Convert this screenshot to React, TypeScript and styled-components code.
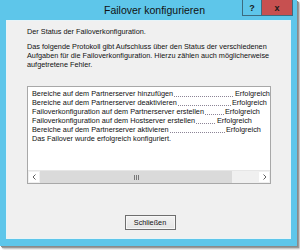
import React from 'react'
import styled, { createGlobalStyle } from 'styled-components'

interface LogEntry {
    text: string
    status?: string
    lead?: number
}

const logEntries: LogEntry[] = [
    { text: 'Bereiche auf dem Partnerserver hinzufügen', status: 'Erfolgreich', lead: 203 },
    { text: 'Bereiche auf dem Partnerserver deaktivieren', status: 'Erfolgreich', lead: 200 },
    { text: 'Failoverkonfiguration auf dem Partnerserver erstellen', status: 'Erfolgreich', lead: 193 },
    { text: 'Failoverkonfiguration auf dem Hostserver erstellen', status: 'Erfolgreich', lead: 185 },
    { text: 'Bereiche auf dem Partnerserver aktivieren', status: 'Erfolgreich', lead: 194 },
    { text: 'Das Failover wurde erfolgreich konfiguriert.' },
]

const GlobalStyle = createGlobalStyle`
    html, body {
        margin: 0;
        padding: 0;
        background: #ffffff;
    }
    body {
        width: 300px;
        height: 250px;
        overflow: hidden;
        font-family: "Liberation Sans", Arial, sans-serif;
    }
`

const Window = styled.div`
    width: 297px;
    height: 246px;
    box-sizing: border-box;
    background: #5ec6ea;
    padding: 0 6px 7px 6px;
    display: flex;
    flex-direction: column;
    box-shadow: 1px 1px 0 #8a8a8a, 2px 2px 1px #9a9a9a, 3px 3px 2px rgba(0, 0, 0, 0.25);
`

const TitleBar = styled.div`
    height: 20px;
    display: grid;
    grid-template-columns: 1fr auto 1fr;
    align-items: start;
    margin-right: -2px;
`

const Title = styled.div`
    grid-column: 2;
    font-family: "Liberation Sans", Arial, sans-serif;
    font-size: 10.5px;
    line-height: 20px;
    color: #111;
    padding-left: 10px;
`

const CaptionButtons = styled.div`
    grid-column: 3;
    justify-self: end;
    display: flex;
`

const CaptionButton = styled.div<{ $close?: boolean }>`
    width: ${p => (p.$close ? 31 : 20)}px;
    height: 16px;
    box-sizing: border-box;
    border: 1px solid #3c6c80;
    border-top: none;
    ${p => (p.$close ? 'border-left: none;' : '')}
    background: ${p => (p.$close ? '#c75050' : '#5ec6ea')};
    display: flex;
    align-items: center;
    justify-content: center;
    font-size: 9px;
    font-weight: bold;
    color: #1a1a1a;
`

const Body = styled.div`
    flex: 1;
    background: #f0f0f0;
    border: 1px solid #e8f4f8;
    padding: 6px 19px 0 20px;
    display: flex;
    flex-direction: column;
    font-size: 7.3px;
    line-height: 9px;
    color: #111;
`

const Paragraph = styled.p<{ $gap: number }>`
    margin: 0 0 ${p => p.$gap}px 0;
`

const LogBox = styled.div`
    height: 98px;
    box-sizing: border-box;
    border: 1px solid #a8a8a8;
    background: #ffffff;
    display: flex;
    flex-direction: column;
`

const LogLines = styled.div`
    flex: 1;
    padding: 2px 0 0 4px;
    overflow: hidden;
`

const LogRow = styled.div`
    display: flex;
    white-space: nowrap;
`

const Lead = styled.span<{ $w: number }>`
    width: ${p => p.$w}px;
    display: flex;
    flex: none;
`

const Dots = styled.span`
    flex: 1;
    margin: 0 1px 0 1px;
    height: 9px;
    background-image: linear-gradient(to right, #8c8496 1px, transparent 1px);
    background-size: 2px 1px;
    background-position: 0 7px;
    background-repeat: repeat-x;
`

const ScrollBar = styled.div`
    height: 12px;
    display: flex;
    background: #f0f0f0;
    border-top: 1px solid #e6e6e6;
`

const ScrollArrow = styled.div`
    width: 12px;
    display: flex;
    align-items: center;
    justify-content: center;
    background: #ffffff;
    border: 1px solid #f0f0f0;
    box-sizing: border-box;
`

const Track = styled.div`
    flex: 1;
    display: flex;
    background: #f0f0f0;
`

const Thumb = styled.div`
    width: 192px;
    background: #dadada;
    display: flex;
    align-items: center;
    justify-content: center;
`

const Grip = styled.div`
    display: flex;
    gap: 1px;
    span {
        width: 1px;
        height: 5px;
        background: #777;
    }
`

const Footer = styled.div`
    display: flex;
    justify-content: center;
    margin-top: 31px;
    padding-left: 2px;
`

const Button = styled.button`
    width: 51px;
    height: 15px;
    box-sizing: border-box;
    border: 1px solid #6e6e6e;
    box-shadow: inset 0 0 0 1px #f7f7f7;
    background: linear-gradient(#f2f2f2, #e4e4e4);
    font-family: "Liberation Sans", Arial, sans-serif;
    font-size: 7.3px;
    color: #111;
    padding: 0;
`

const Chevron: React.FC<{ dir: 'left' | 'right' }> = ({ dir }) => (
    <svg width="5" height="6" viewBox="0 0 5 6">
        <path
            d={dir === 'left' ? 'M3.5 0.5 L1 3 L3.5 5.5' : 'M1.5 0.5 L4 3 L1.5 5.5'}
            stroke="#606060"
            strokeWidth="1"
            fill="none"
        />
    </svg>
)

const App: React.FC = () => {
    return (
        <>
            <GlobalStyle />
            <Window>
                <TitleBar>
                    <Title>Failover konfigurieren</Title>
                    <CaptionButtons>
                        <CaptionButton>?</CaptionButton>
                        <CaptionButton $close>x</CaptionButton>
                    </CaptionButtons>
                </TitleBar>
                <Body>
                    <Paragraph $gap={6}>Der Status der Failoverkonfiguration.</Paragraph>
                    <Paragraph $gap={17}>
                        Das folgende Protokoll gibt Aufschluss über den Status der verschiedenen
                        Aufgaben für die Failoverkonfiguration. Hierzu zählen auch möglicherweise
                        aufgetretene Fehler.
                    </Paragraph>
                    <LogBox>
                        <LogLines>
                            {logEntries.map((entry, i) => (
                                <LogRow key={i}>
                                    {entry.status ? (
                                        <>
                                            <Lead $w={entry.lead ?? 0}>
                                                {entry.text}
                                                <Dots />
                                            </Lead>
                                            <span>{entry.status}</span>
                                        </>
                                    ) : (
                                        entry.text
                                    )}
                                </LogRow>
                            ))}
                        </LogLines>
                        <ScrollBar>
                            <ScrollArrow>
                                <Chevron dir="left" />
                            </ScrollArrow>
                            <Track>
                                <Thumb>
                                    <Grip>
                                        <span />
                                        <span />
                                        <span />
                                    </Grip>
                                </Thumb>
                            </Track>
                            <ScrollArrow>
                                <Chevron dir="right" />
                            </ScrollArrow>
                        </ScrollBar>
                    </LogBox>
                    <Footer>
                        <Button>Schließen</Button>
                    </Footer>
                </Body>
            </Window>
        </>
    )
}

export default App
